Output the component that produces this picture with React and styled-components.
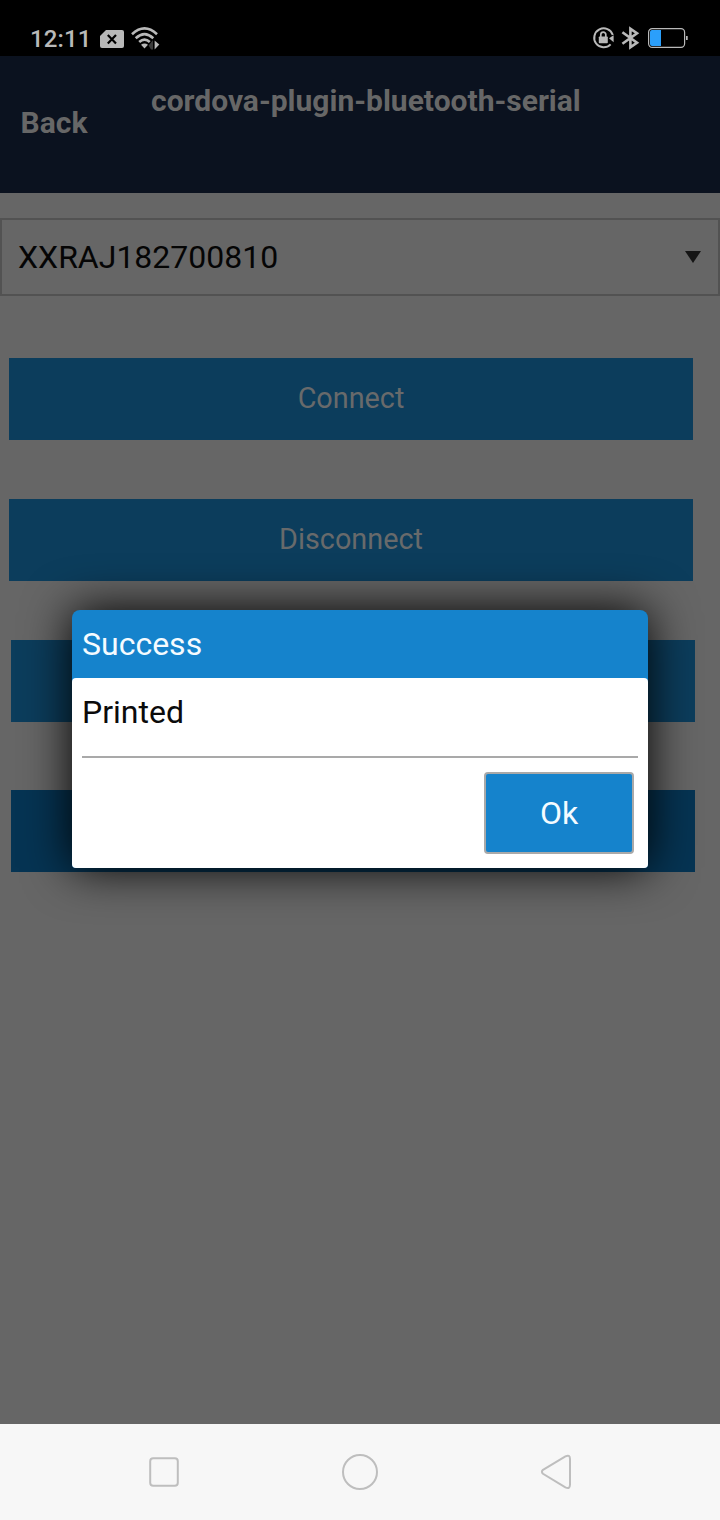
import React from 'react';
import styled, { createGlobalStyle } from 'styled-components';

const GlobalStyle = createGlobalStyle`
  * { box-sizing: border-box; }
  body { margin: 0; background: #666666; font-family: Roboto, "Liberation Sans", sans-serif; }
  button { font-family: inherit; }
`;

const Screen = styled.div`
  position: relative;
  display: flex;
  flex-direction: column;
  width: 720px;
  height: 1520px;
  overflow: hidden;
  background: #666666;
`;

const StatusBar = styled.div`
  display: flex;
  align-items: flex-start;
  justify-content: space-between;
  height: 56px;
  padding: 24px 31px 0 30px;
  background: #000;
  color: #b9b9b9;
`;

const StatusGroup = styled.div`
  display: flex;
  align-items: center;
  height: 28px;
`;

const Clock = styled.span`
  width: 70px;
  font-size: 24px;
  font-weight: 500;
  line-height: 30px;
  letter-spacing: 0.1px;
  padding-top: 2px;
`;

const Header = styled.header`
  display: flex;
  height: 137px;
  background: #0b121f;
  color: #676767;
  font-size: 30px;
  font-weight: 700;
  line-height: 36px;
`;

const BackLink = styled.div`
  width: 151px;
  padding: 49px 0 0 20.6px;
`;

const Title = styled.div`
  padding-top: 27px;
  white-space: nowrap;
`;

const Content = styled.main`
  flex: 1;
  display: flex;
  flex-direction: column;
  padding-top: 25px;
`;

const Select = styled.div`
  display: flex;
  align-items: center;
  justify-content: space-between;
  height: 78px;
  margin-bottom: 62px;
  padding: 0 17px 0 16px;
  border: 2px solid #525252;
  color: #050505;
  font-size: 32px;
`;

const ActionButton = styled.button`
  flex: none;
  width: 684px;
  height: 82px;
  margin: 0 0 ${(p) => p.$gap || 59}px ${(p) => p.$inset || 9}px;
  padding: 0 0 2px;
  border: 0;
  background: ${(p) => (p.$pressed ? '#063453' : '#0c3d5c')};
  color: #686a6b;
  font-size: 28.8px;
`;

const Dialog = styled.section`
  position: absolute;
  top: 610px;
  left: 72px;
  width: 576px;
  height: 258px;
  border-radius: 8px 8px 4px 4px;
  background: #1583cc;
  box-shadow: 0 0 48px #000;
  font-size: 32px;
`;

const DialogTitle = styled.div`
  height: 68px;
  padding: 0 10px;
  color: #f4fbff;
  line-height: 68px;
`;

const DialogBody = styled.div`
  height: 190px;
  padding: 0 10px;
  border-radius: 4px;
  background: #fff;
`;

const Message = styled.div`
  height: 80px;
  border-bottom: 2px solid #a9a9a9;
  color: #0b0b0b;
  line-height: 68px;
`;

const DialogActions = styled.div`
  display: flex;
  justify-content: flex-end;
  padding: 14px 4px 0 0;
`;

const OkButton = styled.button`
  width: 150px;
  height: 82px;
  padding: 0;
  border: 2px solid #a9a9a9;
  border-radius: 4px;
  background: #1583cc;
  color: #f4fbff;
  font-size: 32px;
`;

const NavBar = styled.nav`
  display: flex;
  align-items: center;
  justify-content: space-between;
  height: 96px;
  padding: 0 144px;
  background: #f7f7f7;
`;

const Icon = styled.svg`
  display: block;
  flex: none;
  overflow: visible;
  margin-left: ${(p) => p.$ml || 0}px;
  margin-top: ${(p) => p.$mt || 0}px;
`;

const SimIcon = () => (
  <Icon width="24" height="18" viewBox="0 0 24 18" $mt={2}>
    <path d="M6 0H22Q24 0 24 2V16Q24 18 22 18H2Q0 18 0 16V6Z" fill="#b9b9b9" />
    <path d="M7.8 5L16 13.4M16 5L7.8 13.4" stroke="#000" strokeWidth="2.2" />
  </Icon>
);

const WifiIcon = () => (
  <Icon width="28" height="22" viewBox="0 0 28 22" $ml={7}>
    <g fill="none" stroke="#b9b9b9" strokeWidth="2.6">
      <path d="M1 7.2Q13.5 -4.4 26 7.2" />
      <path d="M4.7 11.2Q13.5 3 22.3 11.2" />
      <path d="M8.2 15Q13.5 10.2 18.8 15" />
    </g>
    <path d="M10 17.8Q13.5 15 17 17.8L13.5 21.4Z" fill="#b9b9b9" />
    <path d="M17.6 18.5L22 13V22.5H20Z" fill="#3c3c3c" />
    <path d="M23.6 13.5V22.5L28.3 17.5Z" fill="#b9b9b9" />
  </Icon>
);

const RotationLockIcon = () => (
  <Icon width="22" height="22" viewBox="0 0 22 22">
    <path d="M17.6 17.4A9.5 9.5 0 1 1 19.8 8" fill="none" stroke="#b9b9b9" strokeWidth="2" />
    <path d="M16 11.2L20.6 8.2V15.2Z" fill="#b9b9b9" />
    <rect x="5.8" y="9.4" width="9" height="6.8" rx="0.8" fill="#b9b9b9" />
    <path d="M7.8 10V7.6A2.5 2.5 0 0 1 12.8 7.6V10" fill="none" stroke="#b9b9b9" strokeWidth="1.7" />
  </Icon>
);

const BluetoothIcon = () => (
  <Icon width="18" height="22" viewBox="0 0 18 22" $ml={7}>
    <path d="M0.4 5.2L15 15.8L8.4 20.2V1.8L15 6.2L0.4 16.8" fill="none" stroke="#b9b9b9" strokeWidth="2.6" />
  </Icon>
);

const BatteryIcon = () => (
  <Icon width="41" height="20" viewBox="0 0 41 20" $ml={8}>
    <rect x="0.6" y="0.6" width="36" height="18.8" rx="3.6" fill="none" stroke="#b9b9b9" strokeWidth="1.2" />
    <path d="M4 2H13V18H4Q2 18 2 16V4Q2 2 4 2Z" fill="#2b9ffb" />
    <path d="M38 8H39.7V12H38Z" fill="#b9b9b9" />
  </Icon>
);

export default function App() {
  return (
    <Screen>
      <GlobalStyle />
      <StatusBar>
        <StatusGroup>
          <Clock>12:11</Clock>
          <SimIcon />
          <WifiIcon />
        </StatusGroup>
        <StatusGroup>
          <RotationLockIcon />
          <BluetoothIcon />
          <BatteryIcon />
        </StatusGroup>
      </StatusBar>
      <Header>
        <BackLink>Back</BackLink>
        <Title>cordova-plugin-bluetooth-serial</Title>
      </Header>
      <Content>
        <Select>
          XXRAJ182700810
          <Icon width="16" height="12" viewBox="0 0 16 12">
            <path d="M0 0H16L8 12Z" fill="#151515" />
          </Icon>
        </Select>
        <ActionButton>Connect</ActionButton>
        <ActionButton>Disconnect</ActionButton>
        <ActionButton $inset={11} $gap={68} />
        <ActionButton $inset={11} $pressed />
      </Content>
      <NavBar>
        <Icon width="40" height="40" viewBox="0 0 40 40">
          <rect x="6.2" y="6.2" width="27.6" height="27.6" rx="3" fill="none" stroke="#bebebe" strokeWidth="2" />
        </Icon>
        <Icon width="40" height="40" viewBox="0 0 40 40">
          <circle cx="20" cy="20" r="17" fill="none" stroke="#bebebe" strokeWidth="2" />
        </Icon>
        <Icon width="40" height="40" viewBox="0 0 40 40">
          <path d="M7 17.8L29.4 4.4Q34 2.2 34 7V32.6Q34 37.6 29.4 35.4L7 21.8Q4.8 19.8 7 17.8Z" fill="none" stroke="#bebebe" strokeWidth="2" />
        </Icon>
      </NavBar>
      <Dialog>
        <DialogTitle>Success</DialogTitle>
        <DialogBody>
          <Message>Printed</Message>
          <DialogActions>
            <OkButton>Ok</OkButton>
          </DialogActions>
        </DialogBody>
      </Dialog>
    </Screen>
  );
}
